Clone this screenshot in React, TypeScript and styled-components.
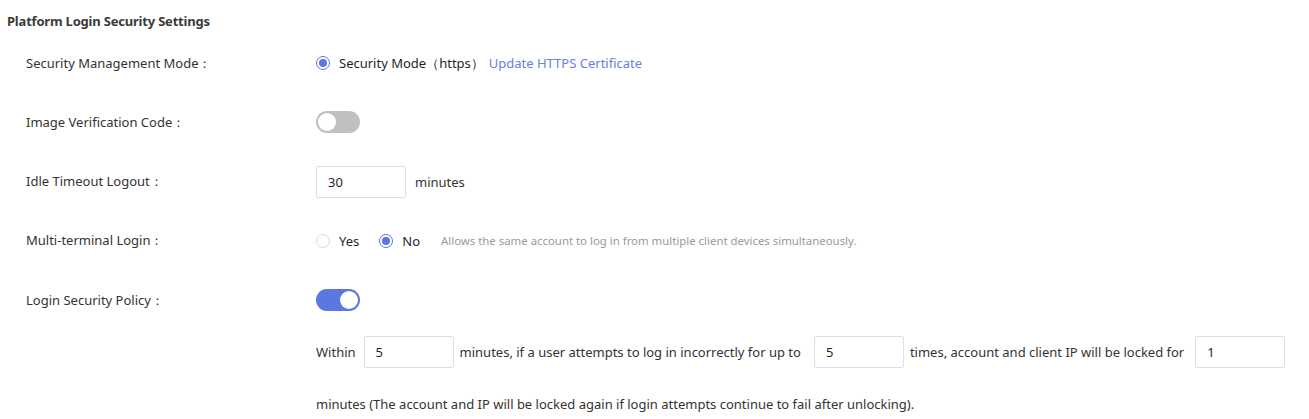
import styled, {createGlobalStyle} from "styled-components";

const GlobalStyle = createGlobalStyle`
  body {
    margin: 0;
    background: #ffffff;
    font-family: "Noto Sans", "Liberation Sans", sans-serif;
    font-size: 13px;
    color: #333333;
  }
`;

const Page = styled.div`
  padding: 10px 0 0 7px;
`;

const Title = styled.div`
  font-size: 13px;
  font-weight: 700;
  color: #3a3a3a;
  height: 22px;
  line-height: 22px;
  letter-spacing: -0.2px;
`;

const Form = styled.div`
  padding: 15px 0 0 19px;
  display: flex;
  flex-direction: column;
`;

const Row = styled.div`
  display: grid;
  grid-template-columns: 290px 1fr;
  align-items: center;
  min-height: 32px;
  margin-bottom: 27.3px;
`;

const Label = styled.div`
  color: #333333;
`;

const Control = styled.div`
  display: flex;
  align-items: center;
`;

const RadioItem = styled.label`
  display: inline-flex;
  align-items: center;
  gap: 9px;
  margin-right: 20px;
  color: #1f1f1f;
`;

const RadioCircle = styled.span<{ $checked?: boolean }>`
  width: 14px;
  height: 14px;
  border-radius: 50%;
  box-sizing: border-box;
  border: 1px solid ${p => p.$checked ? "#5b77e0" : "#d9d9d9"};
  display: inline-flex;
  align-items: center;
  justify-content: center;
  &::after {
    content: "";
    width: 8px;
    height: 8px;
    border-radius: 50%;
    background: ${p => p.$checked ? "#5b77e0" : "transparent"};
  }
`;

const Link = styled.a`
  color: #6b7de6;
  text-decoration: none;
  cursor: pointer;
  margin-left: -15px;
`;

const Toggle = styled.span<{ $on?: boolean }>`
  width: 44px;
  height: 22px;
  border-radius: 11px;
  box-sizing: border-box;
  background: ${p => p.$on ? "#5b77e0" : "#c0c0c0"};
  display: inline-flex;
  align-items: center;
  justify-content: ${p => p.$on ? "flex-end" : "flex-start"};
  padding: 0 2px;
  &::after {
    content: "";
    width: 18px;
    height: 18px;
    border-radius: 50%;
    background: #ffffff;
  }
`;

const NumInput = styled.input<{ $inline?: boolean }>`
  width: 90px;
  height: 32px;
  box-sizing: border-box;
  border: 1px solid #dcdfe6;
  border-radius: 2px;
  padding: 0 11px;
  margin: ${p => p.$inline ? "0 6px 0 8px" : "0"};
  font: inherit;
  color: #1f1f1f;
  outline: none;
`;

const Unit = styled.span`
  margin-left: 9px;
  color: #333333;
`;

const Hint = styled.span`
  font-size: 11.4px;
  color: #999999;
  margin-left: 1px;
`;

const Policy = styled.div`
  margin-left: 290px;
  margin-top: -7px;
  display: flex;
  flex-wrap: wrap;
  align-items: center;
  row-gap: 20px;
  max-width: 990px;
  color: #333333;
  line-height: 32px;
`;

const Phrase = styled.span<{ $after?: number }>`
  margin-right: ${p => p.$after ?? 0}px;
`;

export default function App() {
    return (
        <>
            <GlobalStyle/>
            <Page>
                <Title>Platform Login Security Settings</Title>
                <Form>
                    <Row>
                        <Label>Security Management Mode：</Label>
                        <Control>
                            <RadioItem><RadioCircle $checked/>Security Mode（https）</RadioItem>
                            <Link>Update HTTPS Certificate</Link>
                        </Control>
                    </Row>
                    <Row>
                        <Label>Image Verification Code：</Label>
                        <Control><Toggle/></Control>
                    </Row>
                    <Row>
                        <Label>Idle Timeout Logout：</Label>
                        <Control>
                            <NumInput defaultValue="30"/>
                            <Unit>minutes</Unit>
                        </Control>
                    </Row>
                    <Row>
                        <Label>Multi-terminal Login：</Label>
                        <Control>
                            <RadioItem><RadioCircle/>Yes</RadioItem>
                            <RadioItem><RadioCircle $checked/>No</RadioItem>
                            <Hint>Allows the same account to log in from multiple client devices simultaneously.</Hint>
                        </Control>
                    </Row>
                    <Row>
                        <Label>Login Security Policy：</Label>
                        <Control><Toggle $on/></Control>
                    </Row>
                    <Policy>
                        <Phrase>Within</Phrase>
                        <NumInput $inline defaultValue="5"/>
                        <Phrase $after={5}>minutes, if a user attempts to log in incorrectly for up to</Phrase>
                        <NumInput $inline defaultValue="5"/>
                        <Phrase $after={3}>times, account and client IP will be locked for</Phrase>
                        <NumInput $inline defaultValue="1"/>
                        <Phrase>minutes (The account and IP will be locked again if login attempts continue to fail after unlocking).</Phrase>
                    </Policy>
                </Form>
            </Page>
        </>
    )
}
